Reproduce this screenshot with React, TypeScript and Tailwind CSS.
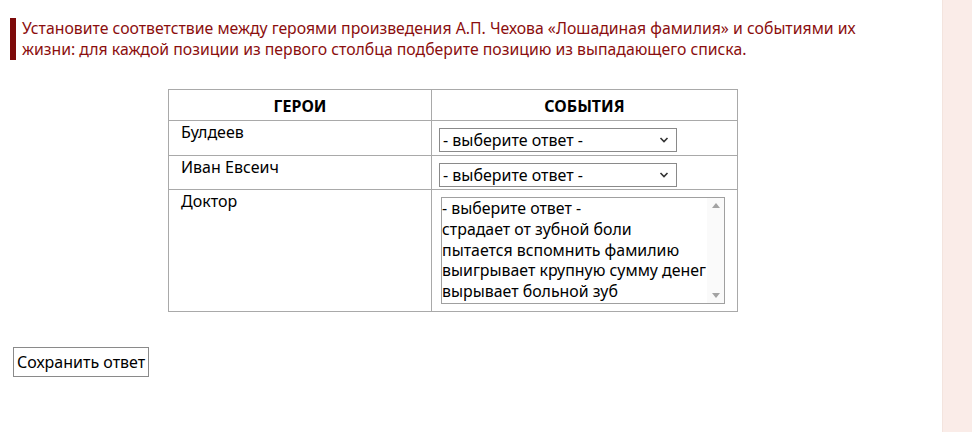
import React from "react";

const font = { fontFamily: '"Noto Sans", "Liberation Sans", Arial, sans-serif' };

function Chevron() {
  return (
    <svg width="10" height="6" viewBox="0 0 10 6" className="shrink-0">
      <path d="M1.5 1 L5 4.5 L8.5 1" fill="none" stroke="#333" strokeWidth="1.6" />
    </svg>
  );
}

function Dropdown() {
  return (
    <div className="flex h-[24px] w-[238px] items-center justify-between border border-[#8a8a8a] bg-white pl-[3px] pr-[7px] text-[16px] leading-none text-black">
      <span>- выберите ответ -</span>
      <Chevron />
    </div>
  );
}

const options = [
  "- выберите ответ -",
  "страдает от зубной боли",
  "пытается вспомнить фамилию",
  "выигрывает крупную сумму денег",
  "вырывает больной зуб",
];

function ListBox() {
  return (
    <div className="flex h-[107px] w-[284px] border border-[#a0a0a0] bg-white">
      <div className="flex-1 overflow-hidden text-[15.9px] leading-[20.8px] text-black">
        {options.map((o) => (
          <div key={o} className="whitespace-nowrap">
            {o}
          </div>
        ))}
      </div>
      <div className="flex w-[17px] flex-col items-center justify-between bg-[#fafafa] py-[5px]">
        <svg width="8" height="5" viewBox="0 0 8 5">
          <path d="M0 5 L4 0 L8 5 Z" fill="#a3a3a3" />
        </svg>
        <svg width="8" height="5" viewBox="0 0 8 5">
          <path d="M0 0 L4 5 L8 0 Z" fill="#a3a3a3" />
        </svg>
      </div>
    </div>
  );
}

export default function App() {
  return (
    <div className="flex min-h-[432px] w-full bg-white" style={font}>
      <main className="flex-1 bg-white pt-[18px]">
        <div className="ml-[10px] flex">
          <div className="w-[6px] shrink-0 bg-[#7d0a0a]" />
          <p className="pl-[6px] text-[15.8px] leading-[21px] text-[#8b0e0e]">
            Установите соответствие между героями произведения А.П. Чехова «Лошадиная фамилия» и событиями их
            <br />
            жизни: для каждой позиции из первого столбца подберите позицию из выпадающего списка.
          </p>
        </div>

        <table className="ml-[168px] mt-[29px] border-collapse text-[16px] text-black">
          <thead>
            <tr className="h-[31px]">
              <th className="w-[263px] border border-[#a9a9a9] pt-[2px] align-middle font-bold leading-[20px]">ГЕРОИ</th>
              <th className="w-[306px] border border-[#a9a9a9] pt-[2px] align-middle font-bold leading-[20px]">СОБЫТИЯ</th>
            </tr>
          </thead>
          <tbody>
            <tr className="h-[35px]">
              <td className="border border-[#a9a9a9] px-[12px] pt-[1px] align-top leading-[20px]">Булдеев</td>
              <td className="border border-[#a9a9a9] px-[7px] pt-[7px] pb-[2px] align-top">
                <Dropdown />
              </td>
            </tr>
            <tr className="h-[34px]">
              <td className="border border-[#a9a9a9] px-[12px] pt-[1px] align-top leading-[20px]">Иван Евсеич</td>
              <td className="border border-[#a9a9a9] px-[7px] pt-[7px] pb-[2px] align-top">
                <Dropdown />
              </td>
            </tr>
            <tr className="h-[122px]">
              <td className="border border-[#a9a9a9] px-[12px] pt-[1px] align-top leading-[20px]">Доктор</td>
              <td className="border border-[#a9a9a9] px-[9px] pt-[7px] pb-[7px] align-top">
                <ListBox />
              </td>
            </tr>
          </tbody>
        </table>

        <button className="ml-[13px] mt-[35px] h-[30px] border border-[#8a8a8a] bg-white px-[3px] text-[16px] leading-none text-black">
          Сохранить ответ
        </button>
      </main>
      <aside className="w-[30px] shrink-0 border-l border-[#f3e4de] bg-[#faece8]" />
    </div>
  );
}
